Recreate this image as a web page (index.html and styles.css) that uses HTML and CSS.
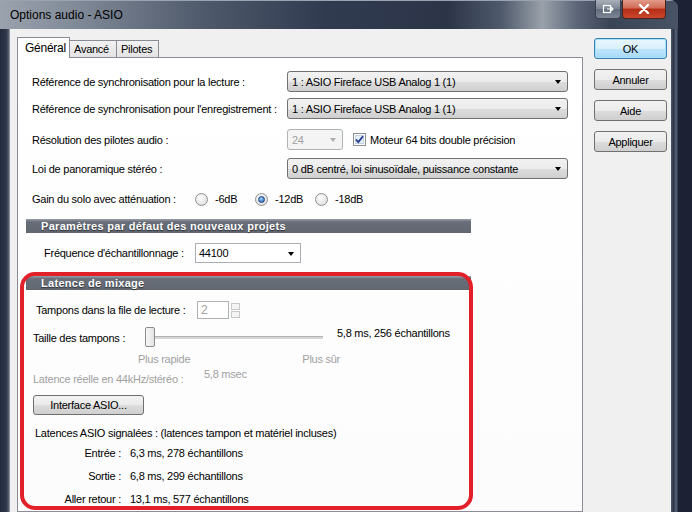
FILE: index.html
```html
<!DOCTYPE html>
<html lang="fr">

<head>
    <meta charset="UTF-8">
    <title>Options audio - ASIO</title>
    <link rel="stylesheet" href="styles.css">
</head>

<body>
    <div class="desktop">
        <div class="window">
            <!-- Title bar -->
            <div class="titlebar">
                <span class="title">Options audio - ASIO</span>
                <div class="caption-buttons">
                    <div class="cap-btn dock">
                        <svg width="12" height="10" viewBox="0 0 12 10">
                            <rect x="1.5" y="1.5" width="7" height="7" fill="none" stroke="#fff" stroke-width="1.2"/>
                            <path d="M5 5h6M9 3l2 2-2 2" fill="none" stroke="#fff" stroke-width="1.2"/>
                        </svg>
                    </div>
                    <div class="cap-btn close">
                        <svg width="12" height="10" viewBox="0 0 12 10">
                            <path d="M2 1l8 8M10 1l-8 8" stroke="#fff" stroke-width="2.4" stroke-linecap="round"/>
                        </svg>
                    </div>
                </div>
            </div>

            <div class="frame">
                <div class="frame-side left"></div>
                <div class="dialog">
                    <div class="tabs-area">
                        <div class="tabstrip">
                            <div class="tab active">Général</div>
                            <div class="tab">Avancé</div>
                            <div class="tab">Pilotes</div>
                        </div>
                        <div class="panel">
                            <div class="row r1">
                                <span class="label col">Référence de synchronisation pour la lecture :</span>
                                <div class="combo wide">1 : ASIO Fireface USB Analog 1 (1)<i class="arrow"></i></div>
                            </div>
                            <div class="row r2">
                                <span class="label col">Référence de synchronisation pour l'enregistrement :</span>
                                <div class="combo wide">1 : ASIO Fireface USB Analog 1 (1)<i class="arrow"></i></div>
                            </div>
                            <div class="row r3">
                                <span class="label col">Résolution des pilotes audio :</span>
                                <div class="combo small disabled">24<i class="arrow"></i></div>
                                <span class="checkbox">
                                    <svg width="13" height="13" viewBox="0 0 13 13">
                                        <rect x="0.5" y="0.5" width="12" height="12" fill="#fff" stroke="#8e8f8f"/>
                                        <rect x="2.5" y="2.5" width="8" height="8" fill="#e6eef7" stroke="#c5d2df"/>
                                        <path d="M3 6.5l2.3 2.6L10 3.2" fill="none" stroke="#21388f" stroke-width="1.8"/>
                                    </svg>
                                </span>
                                <span class="label">Moteur 64 bits double précision</span>
                            </div>
                            <div class="row r4">
                                <span class="label col">Loi de panoramique stéréo :</span>
                                <div class="combo wide">0 dB centré, loi sinusoïdale, puissance constante<i class="arrow"></i></div>
                            </div>
                            <div class="row r5">
                                <span class="label gain-label">Gain du solo avec atténuation :</span>
                                <span class="radio"></span><span class="label radio-text">-6dB</span>
                                <span class="radio checked"></span><span class="label radio-text">-12dB</span>
                                <span class="radio"></span><span class="label radio-text">-18dB</span>
                            </div>

                            <div class="section-head h1">Paramètres par défaut des nouveaux projets</div>
                            <div class="row freq">
                                <span class="label freq-label">Fréquence d'échantillonnage :</span>
                                <div class="combo list">44100<i class="arrow"></i></div>
                            </div>

                            <div class="section-head h2">Latence de mixage</div>
                            <div class="row buffers">
                                <span class="label buffers-label">Tampons dans la file de lecture :</span>
                                <div class="spin">2</div>
                                <div class="spin-arrows"><span></span><span></span></div>
                            </div>
                            <div class="row size">
                                <span class="label size-label">Taille des tampons :</span>
                                <div class="slider">
                                    <div class="track"></div>
                                    <div class="thumb"></div>
                                </div>
                                <span class="label size-value">5,8 ms, 256 échantillons</span>
                            </div>
                            <div class="row ticks">
                                <span class="label dim">Plus rapide</span>
                                <span class="label dim safe">Plus sûr</span>
                            </div>
                            <div class="row real">
                                <span class="label dim real-label">Latence réelle en 44kHz/stéréo :</span>
                                <span class="label dim real-value">5,8 msec</span>
                            </div>
                            <div class="row asio">
                                <button class="btn asio-btn">Interface ASIO...</button>
                            </div>
                            <div class="row reported">
                                <span class="label">Latences ASIO signalées : (latences tampon et matériel incluses)</span>
                            </div>
                            <div class="row lat">
                                <span class="label lat-name">Entrée :</span>
                                <span class="label">6,3 ms, 278 échantillons</span>
                            </div>
                            <div class="row lat">
                                <span class="label lat-name">Sortie :</span>
                                <span class="label">6,8 ms, 299 échantillons</span>
                            </div>
                            <div class="row lat">
                                <span class="label lat-name">Aller retour :</span>
                                <span class="label">13,1 ms, 577 échantillons</span>
                            </div>
                        </div>
                    </div>

                    <div class="side-buttons">
                        <button class="btn default">OK</button>
                        <button class="btn">Annuler</button>
                        <button class="btn">Aide</button>
                        <button class="btn">Appliquer</button>
                    </div>
                </div>
                <div class="frame-side right"></div>
            </div>
        </div>
        <!-- red annotation around the latency block -->
        <div class="highlight"></div>
    </div>
</body>
</html>
```

FILE: styles.css
```css
body {
    margin: 0;
    background-color: #1f2638;
    font-family: "Liberation Sans", Arial, sans-serif;
    font-size: 11px;
    letter-spacing: -0.25px;
    color: #000;
}

.desktop {
    position: relative;
    width: 692px;
    height: 512px;
    overflow: hidden;
    background: linear-gradient(to right, #2a3147, #1c2234);
}

.window {
    width: 678px;
    height: 512px;
    display: flex;
    flex-direction: column;
    background: linear-gradient(to bottom, #3e4a5e, #2c3547 60%, #27304a);
    border-top-right-radius: 8px;
    overflow: hidden;
}

.titlebar {
    height: 29px;
    flex-shrink: 0;
    display: flex;
    align-items: flex-start;
    justify-content: space-between;
    background: linear-gradient(to right, #9aa2ad 0, #7f8896 12%, #4e596b 30%, #313b50 48%, #2c3548 66%, #4f5a6c 74%, #9aa1aa 80%, #5d6779 85%, #3a4457 90%, #495366 100%);
    border-top: 1px solid #9aa3b0;
    box-sizing: border-box;
}

.title {
    margin: 7px 0 0 10px;
    font-size: 12px;
    letter-spacing: 0;
    color: #000;
}

.caption-buttons {
    display: flex;
    gap: 1px;
    margin-right: 12px;
    margin-top: -1px;
}

.cap-btn {
    height: 19px;
    display: flex;
    align-items: center;
    justify-content: center;
    border: 1px solid #3b4150;
    border-top: none;
    border-radius: 0 0 4px 4px;
    box-sizing: border-box;
}

.cap-btn.dock {
    width: 26px;
    background: linear-gradient(to bottom, #a9b0ba, #7c8593 50%, #616b7b 51%, #7d8695);
}

.cap-btn.close {
    width: 44px;
    background: linear-gradient(to bottom, #e39a8a, #cf6a55 45%, #b52d17 50%, #c9462c);
    border-color: #4a2620;
}

.frame {
    flex: 1;
    display: flex;
}

.frame-side.left {
    width: 9px;
    background: linear-gradient(to right, #232a3c, #2f384b 70%, #5c6575);
}

.frame-side.right {
    width: 7px;
    background: linear-gradient(to right, #4f5868, #2a3244 40%, #59637a 70%, #2b3346);
}

.dialog {
    width: 662px;
    background-color: #f0f0f0;
    display: flex;
    padding: 8px 0 0 7px;
    box-sizing: border-box;
    border-left: 1px solid #8a8f99;
}

.tabs-area {
    width: 566px;
    display: flex;
    flex-direction: column;
}

.tabstrip {
    height: 20px;
    display: flex;
    align-items: flex-end;
}

.tab {
    height: 17px;
    padding: 0 4px;
    display: flex;
    align-items: center;
    box-sizing: border-box;
    border: 1px solid #898c95;
    border-bottom: none;
    background: linear-gradient(to bottom, #f2f2f2, #e3e3e3);
    margin-left: -1px;
    font-size: 11px;
}

.tab:first-child {
    margin-left: 0;
}

.tab.active {
    height: 21px;
    margin-bottom: -1px;
    padding: 0 7px;
    background: #fff;
    position: relative;
    z-index: 1;
    font-size: 12px;
    width: 53px;
}

.tab:nth-child(2) {
    width: 48px;
}

.tab:nth-child(3) {
    width: 43px;
}

.panel {
    flex: 1;
    border: 1px solid #898c95;
    background: linear-gradient(to bottom, #ffffff, #fcfcfc);
    padding-left: 14px;
    display: flex;
    flex-direction: column;
}

.row {
    display: flex;
    align-items: center;
    flex-shrink: 0;
}

.label {
    white-space: nowrap;
}

.col {
    width: 255px;
}

.r1 { margin-top: 13px; height: 21px; }
.r2 { margin-top: 6px; height: 21px; }
.r3 { margin-top: 10px; height: 21px; }
.r4 { margin-top: 8px; height: 21px; }
.r5 { margin-top: 12px; height: 16px; }

.combo {
    position: relative;
    height: 21px;
    box-sizing: border-box;
    border: 1px solid #707070;
    border-radius: 3px;
    background: linear-gradient(to bottom, #f2f2f2, #ebebeb 50%, #dddddd 51%, #cfcfcf);
    padding-left: 4px;
    display: flex;
    align-items: center;
}

.combo.wide {
    width: 281px;
}

.combo.small {
    width: 56px;
}

.combo.disabled {
    background: #f4f4f4;
    border-color: #adb2b5;
    color: #a0a0a0;
}

.combo.list {
    width: 106px;
    height: 20px;
    border-radius: 0;
    border-color: #abadb3;
    background: #fff;
    padding-left: 3px;
}

.arrow {
    position: absolute;
    right: 6px;
    top: 8px;
    border-left: 3.5px solid transparent;
    border-right: 3.5px solid transparent;
    border-top: 4px solid #000;
}

.disabled .arrow {
    border-top-color: #b0b0b0;
}

.checkbox {
    display: flex;
    margin-left: 10px;
    margin-right: 4px;
}

.gain-label {
    width: 163px;
}

.radio {
    width: 13px;
    height: 13px;
    box-sizing: border-box;
    border-radius: 50%;
    border: 1px solid #8e8f8f;
    background: radial-gradient(circle at 40% 35%, #fcfcfc, #d8d8d8);
    margin-right: 7px;
    display: flex;
    align-items: center;
    justify-content: center;
}

.radio.checked::after {
    content: "";
    width: 5px;
    height: 5px;
    border-radius: 50%;
    background: radial-gradient(circle at 40% 35%, #9fd4ff, #1a55a8);
    border: 0.5px solid #1d3f7a;
}

.radio-text {
    width: 40px;
}

.section-head {
    flex-shrink: 0;
    margin-left: -6px;
    width: 445px;
    height: 14px;
    box-sizing: border-box;
    padding-left: 15px;
    background: linear-gradient(to bottom, #9a9fa8, #686e79 20%, #61666f);
    color: #fff;
    font-weight: bold;
    font-size: 11px;
    line-height: 14px;
    letter-spacing: 0.3px;
    text-shadow: 0 1px 1px #2c2f35;
}

.h1 { margin-top: 12px; }
.h2 { margin-top: 13px; }

.freq {
    margin-top: 10px;
    height: 20px;
    padding-left: 12px;
}

.freq-label {
    width: 151px;
}

.buffers {
    margin-top: 11px;
    height: 18px;
    padding-left: 4px;
}

.buffers-label {
    width: 161px;
}

.spin {
    width: 32px;
    height: 18px;
    box-sizing: border-box;
    border: 1px solid #adb2b5;
    background: #fff;
    color: #a0a0a0;
    padding-left: 3px;
    font-size: 12px;
    line-height: 16px;
}

.spin-arrows {
    margin-left: 2px;
    display: flex;
    flex-direction: column;
    gap: 1px;
}

.spin-arrows span {
    width: 9px;
    height: 7px;
    box-sizing: border-box;
    border: 1px solid #c8c8c8;
    background: #f4f4f4;
}

.size {
    margin-top: 8px;
    height: 20px;
    padding-left: 1px;
    align-items: stretch;
}

.size-label {
    width: 112px;
    display: flex;
    align-items: center;
    padding-top: 2px;
}

.slider {
    position: relative;
    width: 178px;
}

.track {
    position: absolute;
    left: 5px;
    right: 0;
    top: 9px;
    height: 2px;
    background: #d6d6d6;
    border-top: 1px solid #b4b4b4;
}

.thumb {
    position: absolute;
    left: 0;
    top: 0;
    width: 10px;
    height: 20px;
    box-sizing: border-box;
    border: 1px solid #8c8c8c;
    border-radius: 2px;
    background: linear-gradient(to right, #f7f7f7, #e4e4e4);
}

.size-value {
    margin-left: 14px;
    line-height: 12px;
}

.dim {
    color: #a0a0a0;
}

.ticks {
    margin-top: 5px;
    height: 14px;
    padding-left: 106px;
}

.safe {
    margin-left: 112px;
}

.real {
    margin-top: 2px;
    height: 18px;
    padding-left: 1px;
    align-items: flex-start;
}

.real-label {
    width: 171px;
    padding-top: 5px;
}

.real-value {
    padding-top: 0;
}

.asio {
    margin-top: 9px;
    height: 20px;
    padding-left: 1px;
}

.btn {
    font-family: "Liberation Sans", Arial, sans-serif;
    font-size: 11px;
    letter-spacing: -0.25px;
    color: #000;
    height: 21px;
    box-sizing: border-box;
    border: 1px solid #707070;
    border-radius: 3px;
    background: linear-gradient(to bottom, #f2f2f2, #ebebeb 50%, #dddddd 51%, #cfcfcf);
    padding: 0;
}

.asio-btn {
    width: 111px;
    height: 20px;
}

.reported {
    margin-top: 11px;
    height: 14px;
    padding-left: 3px;
}

.lat {
    height: 23px;
}

.reported + .lat {
    margin-top: 1px;
}

.lat-name {
    width: 89px;
    text-align: right;
    margin-right: 9px;
}

.side-buttons {
    margin-left: 11px;
    margin-top: 1px;
    display: flex;
    flex-direction: column;
    gap: 10px;
}

.side-buttons .btn {
    width: 73px;
}

.btn.default {
    border-color: #3c7fb1;
    background: linear-gradient(to bottom, #eaf6fd, #d9f0fc 50%, #bee6fd 51%, #a7d9f5);
    box-shadow: inset 0 0 0 1px #a6e1fb;
}

.highlight {
    position: absolute;
    left: 20px;
    top: 272px;
    width: 453px;
    height: 238px;
    box-sizing: border-box;
    border: 4px solid #e2202a;
    border-radius: 15px;
}
```
